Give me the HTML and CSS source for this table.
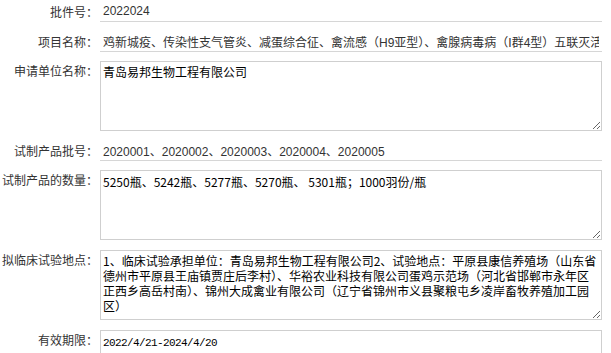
FILE: index.html
```html
<!DOCTYPE html>
<html lang="zh-CN">
<head>
<meta charset="utf-8">
<title>批件信息</title>
<link rel="stylesheet" href="styles.css">
</head>
<body>
<div class="form">
  <label class="lbl lbl-line">批件号：</label>
  <input class="field" type="text" value="2022024" readonly>

  <label class="lbl lbl-line">项目名称：</label>
  <input class="field" type="text" value="鸡新城疫、传染性支气管炎、减蛋综合征、禽流感（H9亚型）、禽腺病毒病（I群4型）五联灭活疫苗" readonly>

  <label class="lbl">申请单位名称：</label>
  <textarea class="area area-sans" readonly>青岛易邦生物工程有限公司</textarea>

  <label class="lbl lbl-line">试制产品批号：</label>
  <input class="field" type="text" value="2020001、2020002、2020003、2020004、2020005" readonly>

  <label class="lbl">试制产品的数量：</label>
  <textarea class="area" readonly>5250瓶、5242瓶、5277瓶、5270瓶、 5301瓶；1000羽份/瓶</textarea>

  <label class="lbl lbl-tall">拟临床试验地点：</label>
  <textarea class="area area-site" readonly>1、临床试验承担单位：青岛易邦生物工程有限公司2、试验地点：平原县康信养殖场（山东省德州市平原县王庙镇贾庄后李村）、华裕农业科技有限公司蛋鸡示范场（河北省邯郸市永年区正西乡高岳村南）、锦州大成禽业有限公司（辽宁省锦州市义县聚粮屯乡凌岸畜牧养殖加工园区）</textarea>

  <label class="lbl lbl-tall">有效期限：</label>
  <textarea class="area area-date" readonly>2022/4/21-2024/4/20</textarea>
</div>
</body>
</html>
```
FILE: styles.css
```css
html, body {
  margin: 0;
  padding: 0;
  background: #ffffff;
}

body {
  font-family: "Noto Sans CJK SC", "Liberation Sans", sans-serif;
  font-size: 12px;
  color: #333333;
}

.form {
  display: grid;
  grid-template-columns: 98px 502px;
  column-gap: 2px;
  row-gap: 9px;
  padding-top: 1px;
  align-items: start;
}

.lbl {
  text-align: right;
  font-size: 12px;
  line-height: 18px;
  padding-top: 1px;
  color: #333333;
  white-space: nowrap;
}

.lbl-line {
  padding-top: 2px;
}

.lbl-tall {
  padding-top: 2px;
}

.field {
  box-sizing: border-box;
  width: 502px;
  height: 21px;
  margin: 0;
  padding: 0 3px;
  border: none;
  border-bottom: 1px solid #d6d6d6;
  font-family: "Liberation Sans", "Noto Sans CJK SC", sans-serif;
  font-size: 12px;
  color: #333333;
  background: #ffffff;
  outline: none;
}

.area {
  box-sizing: border-box;
  width: 502px;
  height: 70px;
  margin: 0;
  padding: 3px 2px;
  border: 1px solid #cfcfcf;
  border-radius: 0;
  font-family: "Noto Sans CJK SC", sans-serif;
  font-size: 12px;
  line-height: 15px;
  color: #000000;
  background: #ffffff;
  outline: none;
  overflow: hidden;
}

.area-sans {
  font-size: 12px;
  line-height: 18px;
  padding-top: 1px;
}

.area-site {
  margin-top: 1px;
  padding-top: 2px;
}

.area-date {
  margin-top: 1px;
  font-family: "Liberation Mono", monospace;
  font-size: 11px;
  letter-spacing: -0.6px;
  padding-top: 5px;
}
```
